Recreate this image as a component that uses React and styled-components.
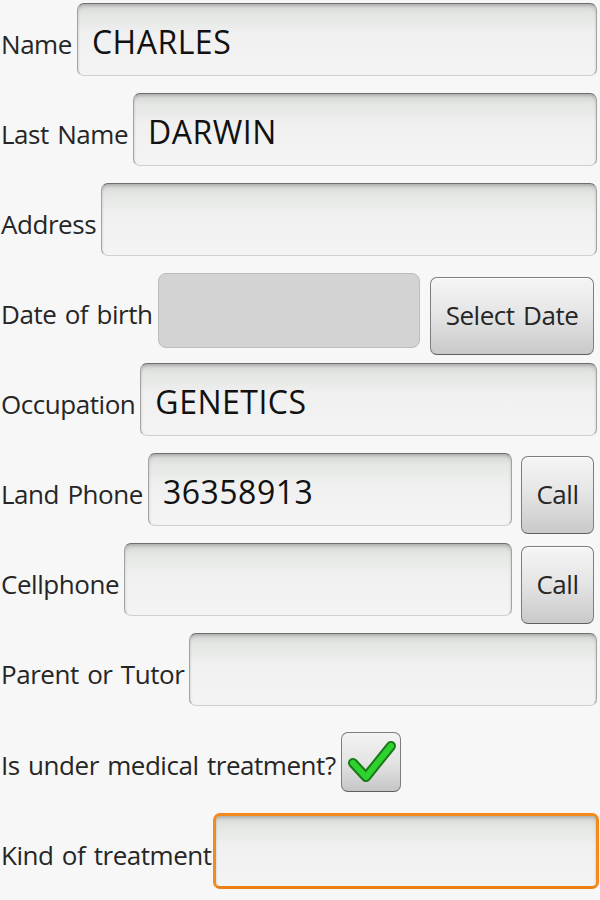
import React from 'react';
import styled, { createGlobalStyle } from 'styled-components';

const GlobalStyle = createGlobalStyle`
  html, body {
    margin: 0;
    padding: 0;
    background: #f7f7f7;
  }
  body {
    font-family: "Open Sans", "DejaVu Sans", sans-serif;
  }
`;

const Form = styled.div`
  width: 600px;
  height: 900px;
  overflow: hidden;
  background: #f7f7f7;
  display: flex;
  flex-direction: column;
`;

const Row = styled.div`
  display: flex;
  align-items: flex-start;
  height: 90px;
  padding-left: 1px;
`;

const Label = styled.span`
  align-self: center;
  font-size: 26px;
  letter-spacing: -0.45px;
  word-spacing: 2px;
  color: #262626;
  white-space: nowrap;
  margin-right: ${({ gap }) => gap ?? 5}px;
  margin-bottom: ${({ lift }) => lift ?? 3}px;
`;

const Field = styled.div`
  flex: 1;
  height: ${({ focused }) => (focused ? 76 : 73)}px;
  margin-top: 3px;
  margin-right: ${({ right }) => right ?? 3}px;
  box-sizing: border-box;
  border-radius: 7px;
  border: ${({ focused }) => (focused ? '3px solid #f28a1e' : '1px solid #a3a3a3')};
  border-top-color: ${({ focused }) => (focused ? '#f28a1e' : '#6f6f6f')};
  border-bottom-color: ${({ focused }) => (focused ? '#ec7f12' : '#cfcfcf')};
  background: linear-gradient(#d3d5d3 0px, #e4e6e4 10px, #eff0ef 30px, #f3f4f3 100%);
  box-shadow: inset 0 2px 3px rgba(0, 0, 0, 0.18);
  display: flex;
  align-items: center;
  padding-left: ${({ focused }) => (focused ? 12 : 14)}px;
  padding-top: 3px;
  font-size: 32px;
  color: #111;
  letter-spacing: 0.5px;
`;

const Disabled = styled.div`
  flex: 1;
  height: 75px;
  margin-top: 3px;
  margin-right: 10px;
  box-sizing: border-box;
  border-radius: 8px;
  border: 1px solid #bcbcbc;
  background: #d3d3d3;
`;

const Button = styled.div`
  width: ${({ w }) => w}px;
  height: 78px;
  margin-top: ${({ top }) => top ?? 6}px;
  margin-right: 6px;
  box-sizing: border-box;
  border-radius: 7px;
  border: 1px solid #7d7d7d;
  border-bottom-color: #5f5f5f;
  background: linear-gradient(#f5f5f5 0%, #e6e6e6 45%, #c9c9c9 100%);
  box-shadow: inset 0 1px 0 #ffffff;
  display: flex;
  align-items: center;
  justify-content: center;
  padding-bottom: 2px;
  font-size: 26px;
  letter-spacing: -0.45px;
  word-spacing: 2px;
  color: #262626;
`;

const CheckBox = styled.div`
  width: 60px;
  height: 60px;
  margin-top: 12px;
  box-sizing: border-box;
  border-radius: 7px;
  border: 1px solid #7d7d7d;
  border-bottom-color: #5f5f5f;
  background: linear-gradient(#f3f3f3 0%, #e4e4e4 50%, #c6c6c6 100%);
  display: flex;
  align-items: center;
  justify-content: center;
`;

const Check = () => (
  <svg width="58" height="58" viewBox="0 0 58 58">
    <path d="M11 30 L24 44 L49 13" fill="none" stroke="#177a17" strokeWidth="10" strokeLinecap="round" strokeLinejoin="round" />
    <path d="M11 30 L24 44 L49 13" fill="none" stroke="#2fd12f" strokeWidth="6" strokeLinecap="round" strokeLinejoin="round" />
  </svg>
);

export default function App() {
  return (
    <>
      <GlobalStyle />
      <Form>
        <Row>
          <Label gap={5}>Name</Label>
          <Field>CHARLES</Field>
        </Row>
        <Row>
          <Label>Last Name</Label>
          <Field>DARWIN</Field>
        </Row>
        <Row>
          <Label>Address</Label>
          <Field />
        </Row>
        <Row>
          <Label>Date of birth</Label>
          <Disabled />
          <Button w={164} top={7}>Select Date</Button>
        </Row>
        <Row>
          <Label>Occupation</Label>
          <Field>GENETICS</Field>
        </Row>
        <Row>
          <Label>Land Phone</Label>
          <Field right={9}>36358913</Field>
          <Button w={73}>Call</Button>
        </Row>
        <Row>
          <Label>Cellphone</Label>
          <Field right={9} />
          <Button w={73}>Call</Button>
        </Row>
        <Row>
          <Label>Parent or Tutor</Label>
          <Field />
        </Row>
        <Row>
          <Label gap={5} lift={0}>Is under medical treatment?</Label>
          <CheckBox>
            <Check />
          </CheckBox>
        </Row>
        <Row>
          <Label gap={1} lift={0}>Kind of treatment</Label>
          <Field focused right={1} />
        </Row>
      </Form>
    </>
  );
}
